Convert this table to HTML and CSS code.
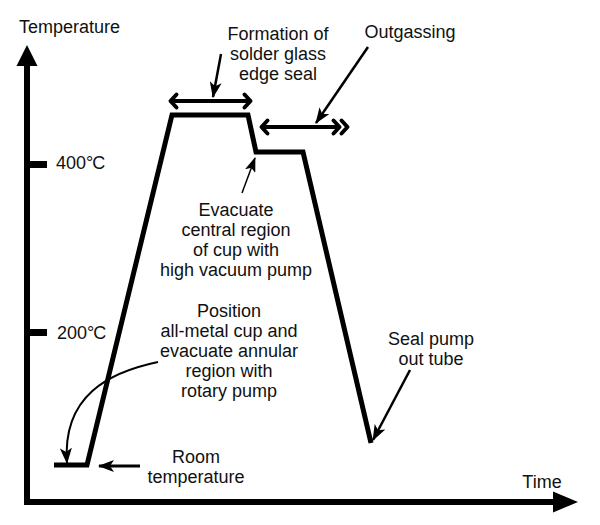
FILE: index.html
```html
<!DOCTYPE html>
<html lang="en">
<head>
<meta charset="utf-8">
<title>Temperature profile</title>
<link rel="stylesheet" href="styles.css">
</head>
<body>
<div class="diagram">
<svg class="chart" width="600" height="525" viewBox="0 0 600 525" xmlns="http://www.w3.org/2000/svg">
  <defs>
    <marker id="head" viewBox="0 0 16 12" refX="15" refY="6" markerWidth="16" markerHeight="12" markerUnits="userSpaceOnUse" orient="auto">
      <path d="M0,0 L16,6 L0,12 L4,6 Z" class="fill"/>
    </marker>
    <marker id="headSmall" viewBox="0 0 15 11" refX="14" refY="5.5" markerWidth="15" markerHeight="11" markerUnits="userSpaceOnUse" orient="auto">
      <path d="M0,0 L15,5.5 L0,11 L3.5,5.5 Z" class="fill"/>
    </marker>
  </defs>

  <!-- axes -->
  <path class="axis" d="M27,62 V502 H558"/>
  <polygon class="fill" points="27,45 37.5,66 16.5,66"/>
  <polygon class="fill" points="578,502 553,491.5 553,512.5"/>

  <!-- ticks -->
  <rect class="fill" x="27" y="161" width="20" height="7"/>
  <rect class="fill" x="27" y="329" width="20" height="7"/>

  <!-- temperature profile -->
  <polyline class="profile" points="54,465 87,465 172,115 248,115 256,152 303,152 371,443"/>

  <!-- formation double arrow -->
  <line class="dbl" x1="170" y1="101" x2="251" y2="101"/>
  <polyline class="chev" points="176.5,94.5 170.5,101 176.5,107.5"/>
  <polyline class="chev" points="244.5,94.5 250.5,101 244.5,107.5"/>

  <!-- outgassing double arrow -->
  <line class="dbl" x1="261" y1="127" x2="340" y2="127"/>
  <polyline class="chev" points="267.5,120.5 261.5,127 267.5,133.5"/>
  <polyline class="chev" points="333.5,120.5 339.5,127 333.5,133.5"/>
  <polyline class="chev" points="341.5,120.5 347.5,127 341.5,133.5"/>

  <!-- pointers -->
  <line class="ptr" x1="221" y1="54" x2="213" y2="97" marker-end="url(#head)"/>
  <line class="ptr" x1="368" y1="47" x2="316" y2="123" marker-end="url(#head)"/>
  <line class="ptr thin" x1="242" y1="193" x2="255" y2="158" marker-end="url(#headSmall)"/>
  <path class="ptr thin2" d="M158,362 C110,372 62,395 67,463" marker-end="url(#head)"/>
  <line class="ptr bold" x1="140" y1="466" x2="99" y2="466" marker-end="url(#head)"/>
  <line class="ptr" x1="410" y1="370" x2="373" y2="440" marker-end="url(#head)"/>

  <!-- labels -->
  <text class="lbl" x="19" y="33">Temperature</text>
  <text class="lbl" x="56" y="169">400<tspan class="deg">°</tspan>C</text>
  <text class="lbl" x="57" y="339">200<tspan class="deg">°</tspan>C</text>

  <text class="lbl mid" x="278" y="40">Formation of</text>
  <text class="lbl mid" x="278" y="60">solder glass</text>
  <text class="lbl mid" x="278" y="80">edge seal</text>

  <text class="lbl mid" x="410" y="38">Outgassing</text>

  <text class="lbl mid" x="236" y="216">Evacuate</text>
  <text class="lbl mid" x="236" y="236">central region</text>
  <text class="lbl mid" x="236" y="256">of cup with</text>
  <text class="lbl mid" x="236" y="276">high vacuum pump</text>

  <text class="lbl mid" x="229" y="317">Position</text>
  <text class="lbl mid" x="229" y="337">all-metal cup and</text>
  <text class="lbl mid" x="229" y="357">evacuate annular</text>
  <text class="lbl mid" x="229" y="377">region with</text>
  <text class="lbl mid" x="229" y="397">rotary pump</text>

  <text class="lbl mid" x="196" y="463">Room</text>
  <text class="lbl mid" x="196" y="483">temperature</text>

  <text class="lbl mid" x="431" y="345">Seal pump</text>
  <text class="lbl mid" x="431" y="365">out tube</text>

  <text class="lbl mid" x="542" y="488">Time</text>
</svg>
</div>
</body>
</html>
```

FILE: styles.css
```css
html, body {
  margin: 0;
  padding: 0;
  background: #ffffff;
}

.diagram {
  width: 600px;
  height: 525px;
  position: relative;
  overflow: hidden;
}

.chart {
  display: block;
}

.fill {
  fill: #000000;
}

.axis {
  fill: none;
  stroke: #000000;
  stroke-width: 6;
  stroke-linejoin: miter;
}

.profile {
  fill: none;
  stroke: #000000;
  stroke-width: 5;
  stroke-linejoin: miter;
  stroke-miterlimit: 10;
}

.dbl {
  stroke: #000000;
  stroke-width: 4;
}

.chev {
  fill: none;
  stroke: #000000;
  stroke-width: 4;
  stroke-linejoin: round;
  stroke-linecap: round;
}

.ptr {
  fill: none;
  stroke: #000000;
  stroke-width: 2.5;
}

.ptr.thin {
  stroke-width: 1.5;
}

.ptr.thin2 {
  stroke-width: 2;
}

.ptr.bold {
  stroke-width: 3;
}

.lbl {
  font-family: "Liberation Sans", Arial, sans-serif;
  font-size: 18px;
  fill: #111111;
}

.lbl.mid {
  text-anchor: middle;
}

.deg {
  letter-spacing: -1px;
}
```
